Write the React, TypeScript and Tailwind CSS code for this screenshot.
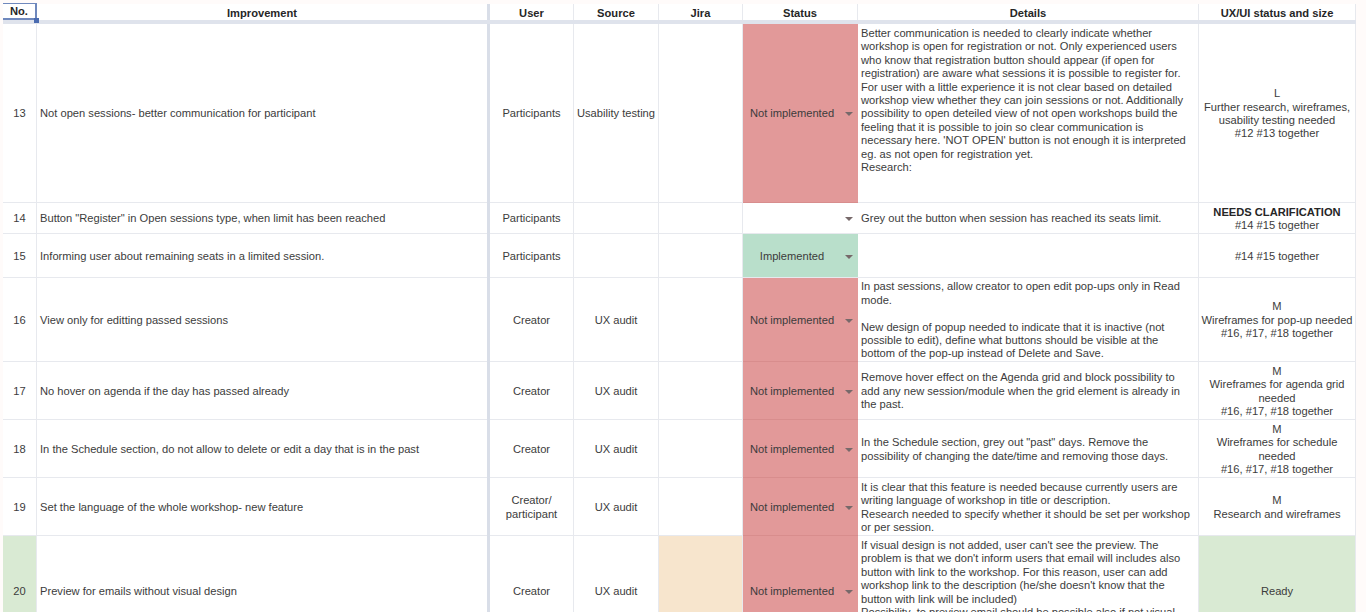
const rows = [
  {
    no: '13',
    height: 'h-[179px]',
    title: 'Not open sessions- better communication for participant',
    user: 'Participants',
    source: 'Usability testing',
    status: 'Not implemented',
    details: `Better communication is needed to clearly indicate whether
workshop is open for registration or not. Only experienced users
who know that registration button should appear (if open for
registration) are aware what sessions it is possible to register for.
For user with a little experience it is not clear based on detailed
workshop view whether they can join sessions or not. Additionally
possibility to open deteiled view of not open workshops build the
feeling that it is possible to join so clear communication is
necessary here. 'NOT OPEN' button is not enough it is interpreted
eg. as not open for registration yet.
Research:`,
    ux: `L
Further research, wireframes,
usability testing needed
#12 #13 together`,
  },
  {
    no: '14',
    height: 'h-[31px]',
    title: 'Button "Register" in Open sessions type, when limit has been reached',
    user: 'Participants',
    status: '',
    details: 'Grey out the button when session has reached its seats limit.',
    centerDetails: true,
    uxBold: 'NEEDS CLARIFICATION',
    ux: '#14 #15 together',
  },
  {
    no: '15',
    height: 'h-[44px]',
    title: 'Informing user about remaining seats in a limited session.',
    user: 'Participants',
    status: 'Implemented',
    details: '',
    ux: '#14 #15 together',
  },
  {
    no: '16',
    height: 'h-[84px]',
    title: 'View only for editting passed sessions',
    user: 'Creator',
    source: 'UX audit',
    status: 'Not implemented',
    details: `In past sessions, allow creator to open edit pop-ups only in Read
mode.

New design of popup needed to indicate that it is inactive (not
possible to edit), define what buttons should be visible at the
bottom of the pop-up instead of Delete and Save.`,
    centerDetails: true,
    ux: `M
Wireframes for pop-up needed
#16, #17, #18 together`,
  },
  {
    no: '17',
    height: 'h-[58px]',
    title: 'No hover on agenda if the day has passed already',
    user: 'Creator',
    source: 'UX audit',
    status: 'Not implemented',
    details: `Remove hover effect on the Agenda grid and block possibility to
add any new session/module when the grid element is already in
the past.`,
    centerDetails: true,
    ux: `M
Wireframes for agenda grid
needed
#16, #17, #18  together`,
  },
  {
    no: '18',
    height: 'h-[58px]',
    title: 'In the Schedule section, do not allow to delete or edit a day that is in the past',
    user: 'Creator',
    source: 'UX audit',
    status: 'Not implemented',
    details: `In the Schedule section, grey out "past" days. Remove the
possibility of changing the date/time and removing those days.`,
    centerDetails: true,
    ux: `M
Wireframes for schedule
needed
#16, #17, #18  together`,
  },
  {
    no: '19',
    height: 'h-[58px]',
    title: 'Set the language of the whole workshop- new feature',
    user: `Creator/
participant`,
    source: 'UX audit',
    status: 'Not implemented',
    details: `It is clear that this feature is needed because currently users are
writing language of workshop in title or description.
Research needed to specify whether it should be set per workshop
or per session.`,
    centerDetails: true,
    ux: `M
Research and wireframes`,
  },
  {
    no: '20',
    height: 'h-[110px]',
    noBg: 'bg-[#d9ead3]',
    jiraBg: 'bg-[#f7e5cd]',
    uxBg: 'bg-[#d9ead3]',
    title: 'Preview for emails without visual design',
    user: 'Creator',
    source: 'UX audit',
    status: 'Not implemented',
    details: `If visual design is not added, user can't see the preview. The
problem is that we don't inform users that email will includes also
button with link to the workshop. For this reason, user can add
workshop link to the description (he/she doesn't know that the
button with link will be included)
Possibility  to preview email should be possible also if not visual`,
    ux: 'Ready',
  },
]

const cols = 'grid grid-cols-[34px_450px_3px_84px_85px_84px_115px_341px_157px] w-[1353px]'
const cell = 'flex items-center justify-center text-center pt-[2px] border-r border-b border-[#e7e9ee] whitespace-pre-line'
const head = 'flex items-center justify-center pt-[2px] border-r border-[#e7e9ee]'

function Arrow() {
  return (
    <svg width="8" height="4" viewBox="0 0 8 4" className="shrink-0">
      <path d="M0 0h8L4 4z" fill="#77696a" />
    </svg>
  )
}

export default function App() {
  return (
    <div className="h-[612px] w-[1366px] overflow-hidden bg-[#fffbfa] pt-[4px] pl-[3px] font-['Liberation_Sans',sans-serif] text-[11.15px] leading-[13.4px] text-[#3c3c3c]">
      <div className={`${cols} h-[16px] bg-white font-bold text-[#262626]`}>
        <div className="relative z-10 -mt-px flex items-center justify-center border-t border-r-2 border-b-2 border-[#6f88bd] pt-[1px]">
          No.
          <span className="absolute -right-[4px] -bottom-[5px] size-[5px] bg-[#4a6bb0]" />
        </div>
        <div className="flex items-center justify-center pt-[2px]">Improvement</div>
        <div className="bg-[#d9dee8]" />
        <div className={head}>User</div>
        <div className={head}>Source</div>
        <div className={head}>Jira</div>
        <div className={head}>Status</div>
        <div className={head}>Details</div>
        <div className={head}>UX/UI status and size</div>
      </div>
      <div className="h-[4px] w-[1353px] bg-[#dfe3ec]" />
      {rows.map(row => (
        <div key={row.no} className={`${cols} ${row.height} bg-white`}>
          <div className={`${cell} ${row.noBg ?? ''}`}>{row.no}</div>
          <div className="flex items-center border-b border-[#e7e9ee] pt-[2px] pl-[3px] whitespace-nowrap">{row.title}</div>
          <div className="bg-[#d9dee8]" />
          <div className={cell}>{row.user}</div>
          <div className={`${cell} whitespace-nowrap`}>{row.source}</div>
          <div className={`${cell} ${row.jiraBg ?? ''}`}></div>
          <div
            className={`flex items-center gap-[4px] border-b pt-[2px] pr-[5px] ${
              row.status === 'Not implemented'
                ? 'border-[#d88d8d] bg-[#e29999]'
                : row.status === 'Implemented'
                  ? 'border-[#e7e9ee] bg-[#b9dfcb]'
                  : 'border-[#e7e9ee]'
            }`}
          >
            <span className="flex-1 text-center whitespace-nowrap">{row.status}</span>
            <Arrow />
          </div>
          <div
            className={`flex border-r border-b border-[#e7e9ee] px-[3px] whitespace-pre ${
              row.centerDetails ? 'items-center pt-[2px]' : 'items-start pt-[3px]'
            }`}
          >
            <span>{row.details}</span>
          </div>
          <div className={`${cell} flex-col ${row.uxBg ?? ''}`}>
            {row.uxBold && <span className="font-bold text-[#262626]">{row.uxBold}</span>}
            <span>{row.ux}</span>
          </div>
        </div>
      ))}
    </div>
  )
}
